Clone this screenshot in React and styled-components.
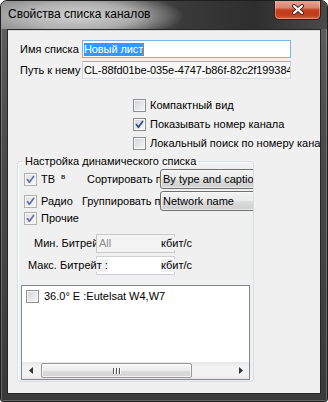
import React from 'react'
import styled, { createGlobalStyle } from 'styled-components'

const GlobalStyle = createGlobalStyle`
  html, body {
    margin: 0;
    padding: 0;
    background: #fff;
  }
`

const Window = styled.div`
  box-sizing: border-box;
  width: 328px;
  height: 402px;
  display: flex;
  flex-direction: column;
  padding: 0 6px 7px 6px;
  border: 1px solid #1e1e1e;
  border-radius: 7px 7px 3px 3px;
  background: linear-gradient(180deg, #626262 0%, #4b4b4b 35%, #3a3a3a 100%);
  box-shadow: inset 0 0 0 1px rgba(255, 255, 255, 0.22);
  overflow: hidden;
`

const TitleBar = styled.div`
  flex: none;
  height: 28px;
  margin: 0 -6px;
  padding: 0 6px 0 7px;
  display: flex;
  align-items: flex-start;
  justify-content: space-between;
  background:
    radial-gradient(ellipse 105px 24px at 78px 15px, rgba(214, 214, 214, 0.95) 0%, rgba(190, 190, 190, 0.8) 55%, rgba(120, 120, 120, 0) 100%),
    linear-gradient(90deg, #8a8a8a 0%, #6a6a6a 30%, #3a3a3a 55%, #2e2e2e 78%, #4a4a4a 100%);
`

const TitleText = styled.span`
  padding-top: 6px;
  font-family: "Liberation Sans", Arial, sans-serif;
  font-size: 12px;
  line-height: 15px;
  color: #000;
  white-space: nowrap;
`

const CloseButton = styled.div`
  box-sizing: border-box;
  width: 47px;
  height: 20px;
  margin-top: -1px;
  display: flex;
  align-items: center;
  justify-content: center;
  border: 1px solid #3b1810;
  border-top: none;
  border-radius: 0 0 5px 5px;
  background: linear-gradient(180deg, #e9a999 0%, #d98470 40%, #c4421f 52%, #c2391a 75%, #d3603e 100%);
  box-shadow: inset 0 0 0 1px rgba(255, 210, 200, 0.45);
`

const Client = styled.div`
  flex: 1;
  min-height: 0;
  display: flex;
  flex-direction: column;
  padding: 10px 0 0 12px;
  background: #f0f0f0;
  border: 1px solid #262626;
  box-shadow: inset 0 1px 0 #d8d8d8;
  overflow: hidden;
  font-family: "Liberation Sans", Arial, sans-serif;
  font-size: 11px;
  line-height: 13px;
  color: #000;
`

const FieldRow = styled.div`
  display: flex;
  align-items: center;
  height: 18px;
  & + & {
    margin-top: 3px;
  }
`

const FieldLabel = styled.span`
  flex: none;
  width: 62px;
  overflow: hidden;
  white-space: nowrap;
`

const TextBox = styled.div`
  box-sizing: border-box;
  flex: none;
  width: 209px;
  height: 18px;
  padding: 0 1px;
  display: flex;
  align-items: center;
  overflow: hidden;
  white-space: nowrap;
  letter-spacing: -0.1px;
  border: 1px solid;
  border-color: ${p => (p.$focused ? '#7fb3e8' : '#a9abb1 #cfd3d9 #d9dee4 #cfd3d9')};
  background: ${p => (p.$focused ? '#fff' : '#f6f6f6')};
`

const Selection = styled.span`
  background: #3399ff;
  color: #fff;
  line-height: 13px;
`

const Caret = styled.span`
  display: inline-block;
  width: 1px;
  height: 13px;
  background: #e2731c;
`

const OptionList = styled.div`
  margin: 17px 0 0 113px;
  display: flex;
  flex-direction: column;
`

const OptionRow = styled.div`
  display: flex;
  align-items: center;
  gap: 4px;
  height: 19px;
  white-space: nowrap;
`

const Group = styled.fieldset`
  box-sizing: border-box;
  width: 237px;
  min-width: 0;
  margin: 2px 0 0 -3px;
  padding: 0;
  border: 1px solid #d5dfe5;
  border-radius: 3px;
  box-shadow: inset 1px 1px 0 #fff;
`

const Legend = styled.legend`
  margin-left: 5px;
  padding: 0 2px;
  font-size: 11px;
  line-height: 13px;
`

const GroupRow = styled.div`
  display: flex;
  align-items: center;
  height: ${p => p.$h}px;
  margin-top: ${p => p.$top}px;
  padding-left: 6px;
  overflow: hidden;
  white-space: nowrap;
`

const CheckCell = styled.div`
  flex: none;
  width: ${p => p.$w}px;
  align-self: stretch;
  display: flex;
  align-items: center;
  gap: 4px;
`

const Sup = styled.span`
  align-self: flex-start;
  margin: 3px 0 0 2px;
  font-size: 8px;
  line-height: 9px;
`

const SideLabel = styled.span`
  flex: none;
  width: ${p => p.$w}px;
  overflow: hidden;
`

const Combo = styled.div`
  box-sizing: border-box;
  flex: none;
  width: 112px;
  height: 20px;
  padding-left: 2px;
  display: flex;
  align-items: center;
  border: 1px solid #707070;
  border-radius: 3px;
  background: linear-gradient(180deg, #f2f2f2 0%, #ebebeb 50%, #dddddd 50%, #cfcfcf 100%);
  box-shadow: inset 0 0 0 1px rgba(255, 255, 255, 0.6);
`

const BitRow = styled.div`
  display: flex;
  align-items: center;
  height: 19px;
  margin-top: ${p => p.$top}px;
  padding-left: ${p => p.$indent}px;
  white-space: nowrap;
`

const BitLabel = styled.span`
  position: relative;
  z-index: 1;
  flex: none;
  width: ${p => p.$w}px;
  margin-right: ${p => p.$overlap || 0}px;
  background: #f0f0f0;
  overflow: ${p => (p.$overlap ? 'visible' : 'hidden')};
`

const BitBox = styled.div`
  box-sizing: border-box;
  flex: none;
  width: 79px;
  height: 19px;
  padding-left: 2px;
  display: flex;
  align-items: center;
  border: 1px solid ${p => (p.$disabled ? '#c9c9c9' : '#cfd1d6')};
  background: ${p => (p.$disabled ? '#f3f3f3' : '#fff')};
  color: #8d8d8d;
`

const Unit = styled.span`
  position: relative;
  z-index: 1;
  margin-left: -14px;
  padding-right: 3px;
  background: #f0f0f0;
`

const ListBox = styled.div`
  box-sizing: border-box;
  width: 229px;
  height: 95px;
  margin: 10px 0 1px 3px;
  display: flex;
  flex-direction: column;
  border: 1px solid #828790;
  background: #fff;
`

const ListItem = styled.div`
  display: flex;
  align-items: center;
  gap: 5px;
  height: 16px;
  margin-top: 2px;
  padding-left: 4px;
  white-space: nowrap;
`

const HScroll = styled.div`
  margin-top: auto;
  height: 17px;
  display: flex;
  align-items: center;
  background: linear-gradient(180deg, #e6e6e6 0%, #f2f2f2 25%, #f2f2f2 75%, #e9e9e9 100%);
`

const ScrollArrow = styled.div`
  flex: none;
  width: 17px;
  height: 17px;
  display: flex;
  align-items: center;
  justify-content: center;
`

const Thumb = styled.div`
  box-sizing: border-box;
  flex: none;
  width: 151px;
  height: 15px;
  margin-left: 2px;
  display: flex;
  align-items: center;
  justify-content: center;
  gap: 1px;
  border: 1px solid #979797;
  border-radius: 2px;
  background: linear-gradient(180deg, #f7f7f7 0%, #ececec 50%, #dcdcdc 51%, #d4d4d4 100%);
  box-shadow: inset 0 0 0 1px rgba(255, 255, 255, 0.7);
`

const Grip = styled.span`
  width: 1px;
  height: 6px;
  background: #555;
  box-shadow: 1px 0 0 #fff;
  margin-right: 1px;
`

const Fill = styled.div`
  flex: 1;
`

const Box = styled.span`
  box-sizing: border-box;
  flex: none;
  width: 13px;
  height: 13px;
  display: inline-flex;
  align-items: center;
  justify-content: center;
  border: 1px solid ${p => (p.$muted ? '#b1b1b1' : '#8e8f8f')};
  background: ${p =>
    p.$muted
      ? 'linear-gradient(135deg, #dfe0e2 0%, #eeeeee 55%, #f9f9f9 100%)'
      : 'linear-gradient(135deg, #cfd1d6 0%, #e6e7e9 55%, #f7f7f7 100%)'};
  box-shadow: inset 0 0 0 1px #f7f7f7;
`

function CheckBox({ checked, muted }) {
  return (
    <Box $muted={muted}>
      {checked && (
        <svg width="11" height="11" viewBox="0 0 11 11">
          <path
            d="M2.4 5.6 L4.4 8.3 L8.6 2.4"
            fill="none"
            stroke={muted ? '#5f73a8' : '#2d4a8c'}
            strokeWidth="1.7"
            strokeLinecap="round"
            strokeLinejoin="round"
          />
        </svg>
      )}
    </Box>
  )
}

export default function App() {
  return (
    <>
      <GlobalStyle />
      <Window>
        <TitleBar>
          <TitleText>Свойства списка каналов</TitleText>
          <CloseButton>
            <svg width="14" height="11" viewBox="0 0 14 11">
              <path d="M3 2 L11 9 M11 2 L3 9" stroke="#4a2a22" strokeWidth="4" strokeLinecap="round" />
              <path d="M3 2 L11 9 M11 2 L3 9" stroke="#fff" strokeWidth="2.2" strokeLinecap="round" />
            </svg>
          </CloseButton>
        </TitleBar>
        <Client>
          <FieldRow>
            <FieldLabel>Имя списка</FieldLabel>
            <TextBox $focused>
              <Selection>Новый лист</Selection>
              <Caret />
            </TextBox>
          </FieldRow>
          <FieldRow>
            <FieldLabel>Путь к нему</FieldLabel>
            <TextBox>CL-88fd01be-035e-4747-b86f-82c2f199384</TextBox>
          </FieldRow>

          <OptionList>
            <OptionRow>
              <CheckBox />
              Компактный вид
            </OptionRow>
            <OptionRow>
              <CheckBox checked />
              Показывать номер канала
            </OptionRow>
            <OptionRow>
              <CheckBox />
              Локальный поиск по номеру канала
            </OptionRow>
          </OptionList>

          <Group>
            <Legend>Настройка динамического списка</Legend>
            <GroupRow $h={20} $top={1}>
              <CheckCell $w={63}>
                <CheckBox checked muted />
                <span>ТВ</span>
                <Sup>в</Sup>
              </CheckCell>
              <SideLabel $w={73}>Сортировать по</SideLabel>
              <Combo>By type and caption</Combo>
            </GroupRow>
            <GroupRow $h={20} $top={2}>
              <CheckCell $w={58}>
                <CheckBox checked muted />
                <span>Радио</span>
              </CheckCell>
              <SideLabel $w={78}>Группировать по</SideLabel>
              <Combo>Network name</Combo>
            </GroupRow>
            <GroupRow $h={14} $top={0}>
              <CheckCell $w={80}>
                <CheckBox checked muted />
                <span>Прочие</span>
              </CheckCell>
            </GroupRow>

            <BitRow $top={9} $indent={16}>
              <BitLabel $w={62}>Мин. Битрейт</BitLabel>
              <BitBox $disabled>All</BitBox>
              <Unit>кбит/с</Unit>
            </BitRow>
            <BitRow $top={3} $indent={10}>
              <BitLabel $w={80} $overlap={-12}>Макс. Битрейт :</BitLabel>
              <BitBox />
              <Unit>кбит/с</Unit>
            </BitRow>

            <ListBox>
              <ListItem>
                <CheckBox />
                36.0° E :Eutelsat W4,W7
              </ListItem>
              <HScroll>
                <ScrollArrow>
                  <svg width="4" height="7" viewBox="0 0 4 7">
                    <path d="M4 0 L0 3.5 L4 7 Z" fill="#333" />
                  </svg>
                </ScrollArrow>
                <Thumb>
                  <Grip />
                  <Grip />
                  <Grip />
                </Thumb>
                <Fill />
                <ScrollArrow>
                  <svg width="4" height="7" viewBox="0 0 4 7">
                    <path d="M0 0 L4 3.5 L0 7 Z" fill="#333" />
                  </svg>
                </ScrollArrow>
              </HScroll>
            </ListBox>
          </Group>
        </Client>
      </Window>
    </>
  )
}
